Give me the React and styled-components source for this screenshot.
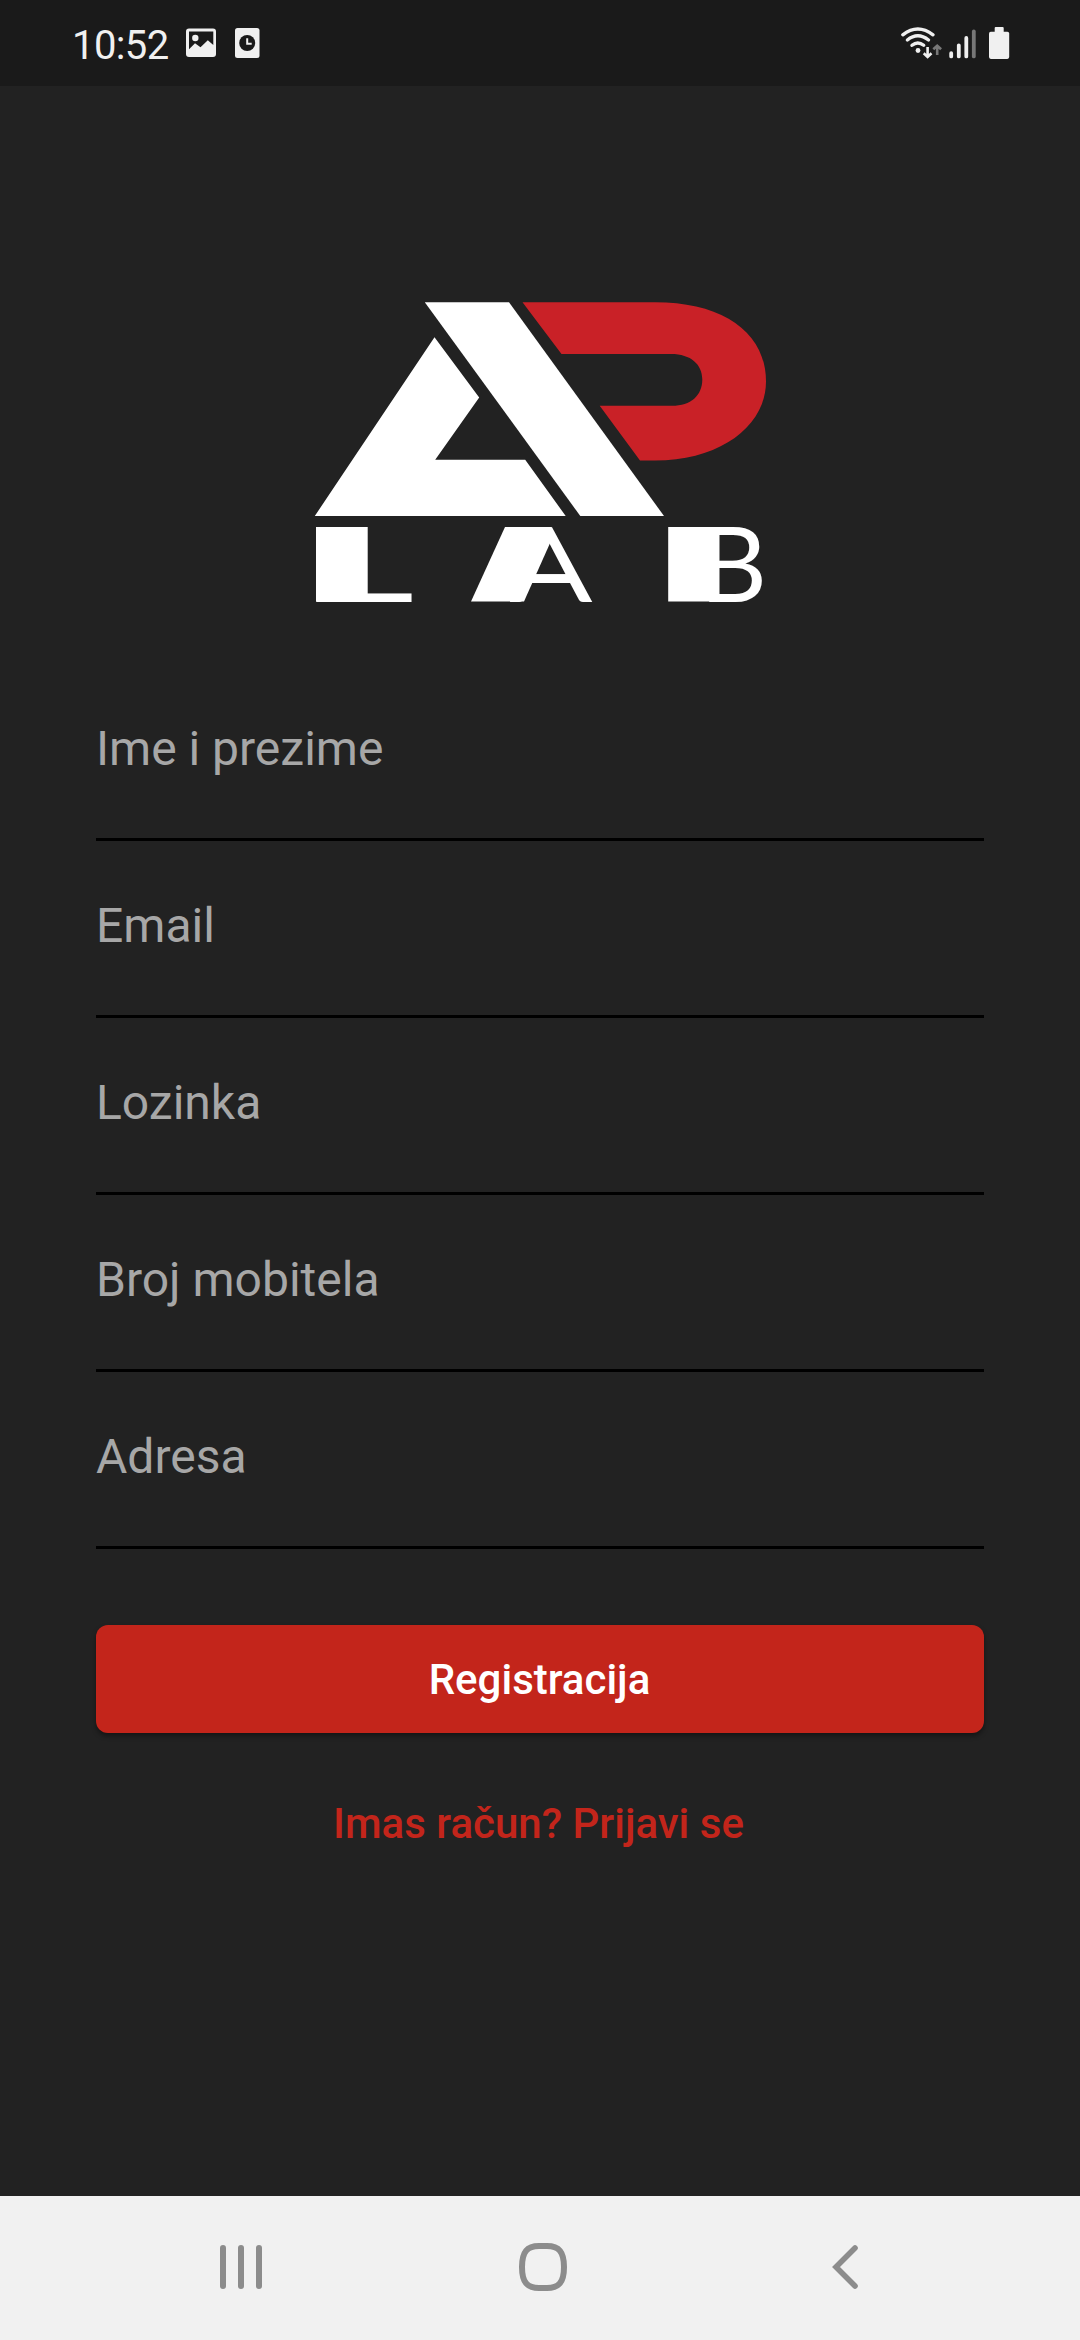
import React from 'react';
import styled, { createGlobalStyle } from 'styled-components';

const GlobalStyle = createGlobalStyle`
  *, *::before, *::after { box-sizing: border-box; }
  html, body { margin: 0; padding: 0; background: #222222; }
  body { font-family: Roboto, "Noto Sans", sans-serif; }
  svg { display: block; flex: none; }
`;

const Screen = styled.div`
  width: 1080px;
  height: 2340px;
  display: flex;
  flex-direction: column;
  background: #222222;
  overflow: hidden;
`;

const StatusBar = styled.header`
  height: 86px;
  flex: none;
  display: flex;
  justify-content: space-between;
  align-items: flex-start;
  padding: 0 70px 0 72px;
  background: #1a1a1a;
`;

const StatusGroup = styled.div`
  display: flex;
  align-items: flex-start;
`;

const Clock = styled.span`
  width: 114px;
  padding-top: 22px;
  font-size: 40px;
  line-height: 47px;
  letter-spacing: -0.6px;
  color: #f0f0f0;
  white-space: nowrap;
`;

const Content = styled.main`
  flex: 1;
  display: flex;
  flex-direction: column;
  align-items: stretch;
  padding: 215px 96px 0;
`;

const LogoWrap = styled.div`
  display: flex;
  justify-content: center;
  height: 330px;
  margin-bottom: 33px;
`;

const LogoText = styled.text`
  font-family: Lato, sans-serif;
  font-weight: 400;
  font-size: 104px;
  fill: #ffffff;
`;

const Form = styled.form`
  display: flex;
  flex-direction: column;
  margin: 0;
`;

const Field = styled.label`
  height: 177px;
  display: flex;
  align-items: flex-start;
  padding-top: 57px;
  border-bottom: 3px solid #000000;
  font-size: 48px;
  line-height: 56px;
  color: #a7a7a7;
`;

const SubmitButton = styled.button`
  height: 108px;
  margin: 76px 0 0;
  padding: 2px 1px 0 0;
  border: 0;
  border-radius: 12px;
  background: #c3251b;
  box-shadow: 0 3px 5px rgba(0, 0, 0, 0.4);
  font-family: inherit;
  font-size: 42px;
  font-weight: 500;
  line-height: 50px;
  color: #ffffff;
`;

const LoginLink = styled.a`
  align-self: center;
  margin: 66px 3px 0 0;
  font-size: 42px;
  font-weight: 500;
  line-height: 50px;
  color: #c3251b;
  white-space: nowrap;
`;

const NavBar = styled.nav`
  height: 144px;
  flex: none;
  display: flex;
  align-items: center;
  justify-content: space-between;
  padding: 0 222px 2px 220px;
  background: #f1f1f1;
`;

const HomeButton = styled.div`
  margin-right: 8px;
`;

const fields = ['Ime i prezime', 'Email', 'Lozinka', 'Broj mobitela', 'Adresa'];

function NotificationIcons() {
  return (
    <svg width="76" height="86" viewBox="186 0 76 86">
      <rect x="186" y="28.5" width="30" height="28.5" rx="3" fill="#f0f0f0" />
      <path d="M189 31.5h24.3v13.5l-5.5-4.8-7.3 7-5.5-4-6 6z" fill="#1a1a1a" />
      <circle cx="195.3" cy="38" r="3.2" fill="#f0f0f0" />
      <rect x="235" y="28" width="24.5" height="30" rx="2.5" fill="#f0f0f0" />
      <circle cx="247.2" cy="43" r="8" fill="#1a1a1a" />
      <path d="M247.2 38.2v5.5h4.5" fill="none" stroke="#f0f0f0" strokeWidth="2" />
    </svg>
  );
}

function SystemIcons() {
  return (
    <svg width="110" height="86" viewBox="900 0 110 86">
      <g fill="none" stroke="#f0f0f0" strokeWidth="3.4" strokeLinecap="round">
        <path d="M902.8 34.8Q917.8 23.3 933 34.8" />
        <path d="M907.4 40Q917.8 31.6 928.5 40" />
        <path d="M912 45.3Q917.8 40.5 923.7 45.3" />
      </g>
      <circle cx="918" cy="50.5" r="2.4" fill="#f0f0f0" />
      <path d="M927.6 47v8.5M923.7 53.3l3.9 3.6 3.9-3.6" fill="none" stroke="#f0f0f0" strokeWidth="2.6" />
      <path d="M937.2 55V46.5M933.3 49.3l3.9-3.6 3.9 3.6" fill="none" stroke="#777777" strokeWidth="2.6" />
      <g strokeWidth="3.8" strokeLinecap="round" stroke="#f0f0f0">
        <path d="M951.2 53.2v3.2M958.8 45.3v11.1M966.3 38v18.4" />
        <path d="M973.8 31.4v25" stroke="#777777" />
      </g>
      <rect x="994.7" y="27" width="9" height="8" rx="1" fill="#f0f0f0" />
      <rect x="989" y="31.7" width="20.2" height="27.2" rx="1.8" fill="#f0f0f0" />
    </svg>
  );
}

function Logo() {
  return (
    <svg width="500" height="330" viewBox="290 301 500 330" role="img" aria-label="AP LAB">
      <g fill="#ffffff">
        <path d="M434.5 337.2L479.2 397.5L435.2 459.8H525.2L565.7 516H314.8Z" />
        <path d="M424.8 302.2H509L664 516H580.3Z" />
      </g>
      <path
        d="M522.5 302.2H655C724 302.2 766 333 766 381.5C766 425 722 460.5 655 460.5H640L599.7 405.8H672C691 405.8 702.3 395.5 702.3 379.5C702.3 364.5 691 354 671 354H561.5Z"
        fill="#c92127"
      />
      {/* Heavy stems behind the wordmark letters */}
      <rect x="316" y="527" width="51.7" height="74.5" fill="#ffffff" />
      <path d="M505 527H551.8L550.2 542.7L524 601.5H471Z" fill="#ffffff" />
      <rect x="532" y="574.3" width="39" height="8.7" fill="#ffffff" />
      <rect x="668.2" y="527" width="51" height="74.5" fill="#ffffff" />
      <LogoText transform="translate(295 601.5) scale(2.25 1)">L</LogoText>
      <LogoText transform="translate(509.4 601.5) skewX(3.8) scale(1.18 1)">A</LogoText>
      <LogoText transform="translate(699.8 601.5)">B</LogoText>
    </svg>
  );
}

function RecentsIcon() {
  return (
    <svg width="42" height="46" viewBox="0 0 42 46">
      <path d="M3 4v38M21 4v38M39 4v38" stroke="#8c8c8c" strokeWidth="6" strokeLinecap="round" />
    </svg>
  );
}

function HomeIcon() {
  return (
    <svg width="48" height="48" viewBox="0 0 48 48">
      <path
        d="M20 3H28C40 3 45 9 45 24S40 45 28 45H20C8 45 3 39 3 24S8 3 20 3Z"
        fill="none"
        stroke="#8c8c8c"
        strokeWidth="6"
      />
    </svg>
  );
}

function BackIcon() {
  return (
    <svg width="26" height="46" viewBox="0 0 26 46">
      <path d="M23 4L4 23L23 42" fill="none" stroke="#8c8c8c" strokeWidth="5.6" strokeLinecap="round" />
    </svg>
  );
}

export default function App() {
  return (
    <>
      <GlobalStyle />
      <Screen>
        <StatusBar>
          <StatusGroup>
            <Clock>10:52</Clock>
            <NotificationIcons />
          </StatusGroup>
          <StatusGroup>
            <SystemIcons />
          </StatusGroup>
        </StatusBar>
        <Content>
          <LogoWrap>
            <Logo />
          </LogoWrap>
          <Form>
            {fields.map((name) => (
              <Field key={name}>{name}</Field>
            ))}
            <SubmitButton type="button">Registracija</SubmitButton>
            <LoginLink>Imas račun? Prijavi se</LoginLink>
          </Form>
        </Content>
        <NavBar>
          <RecentsIcon />
          <HomeButton>
            <HomeIcon />
          </HomeButton>
          <BackIcon />
        </NavBar>
      </Screen>
    </>
  );
}
